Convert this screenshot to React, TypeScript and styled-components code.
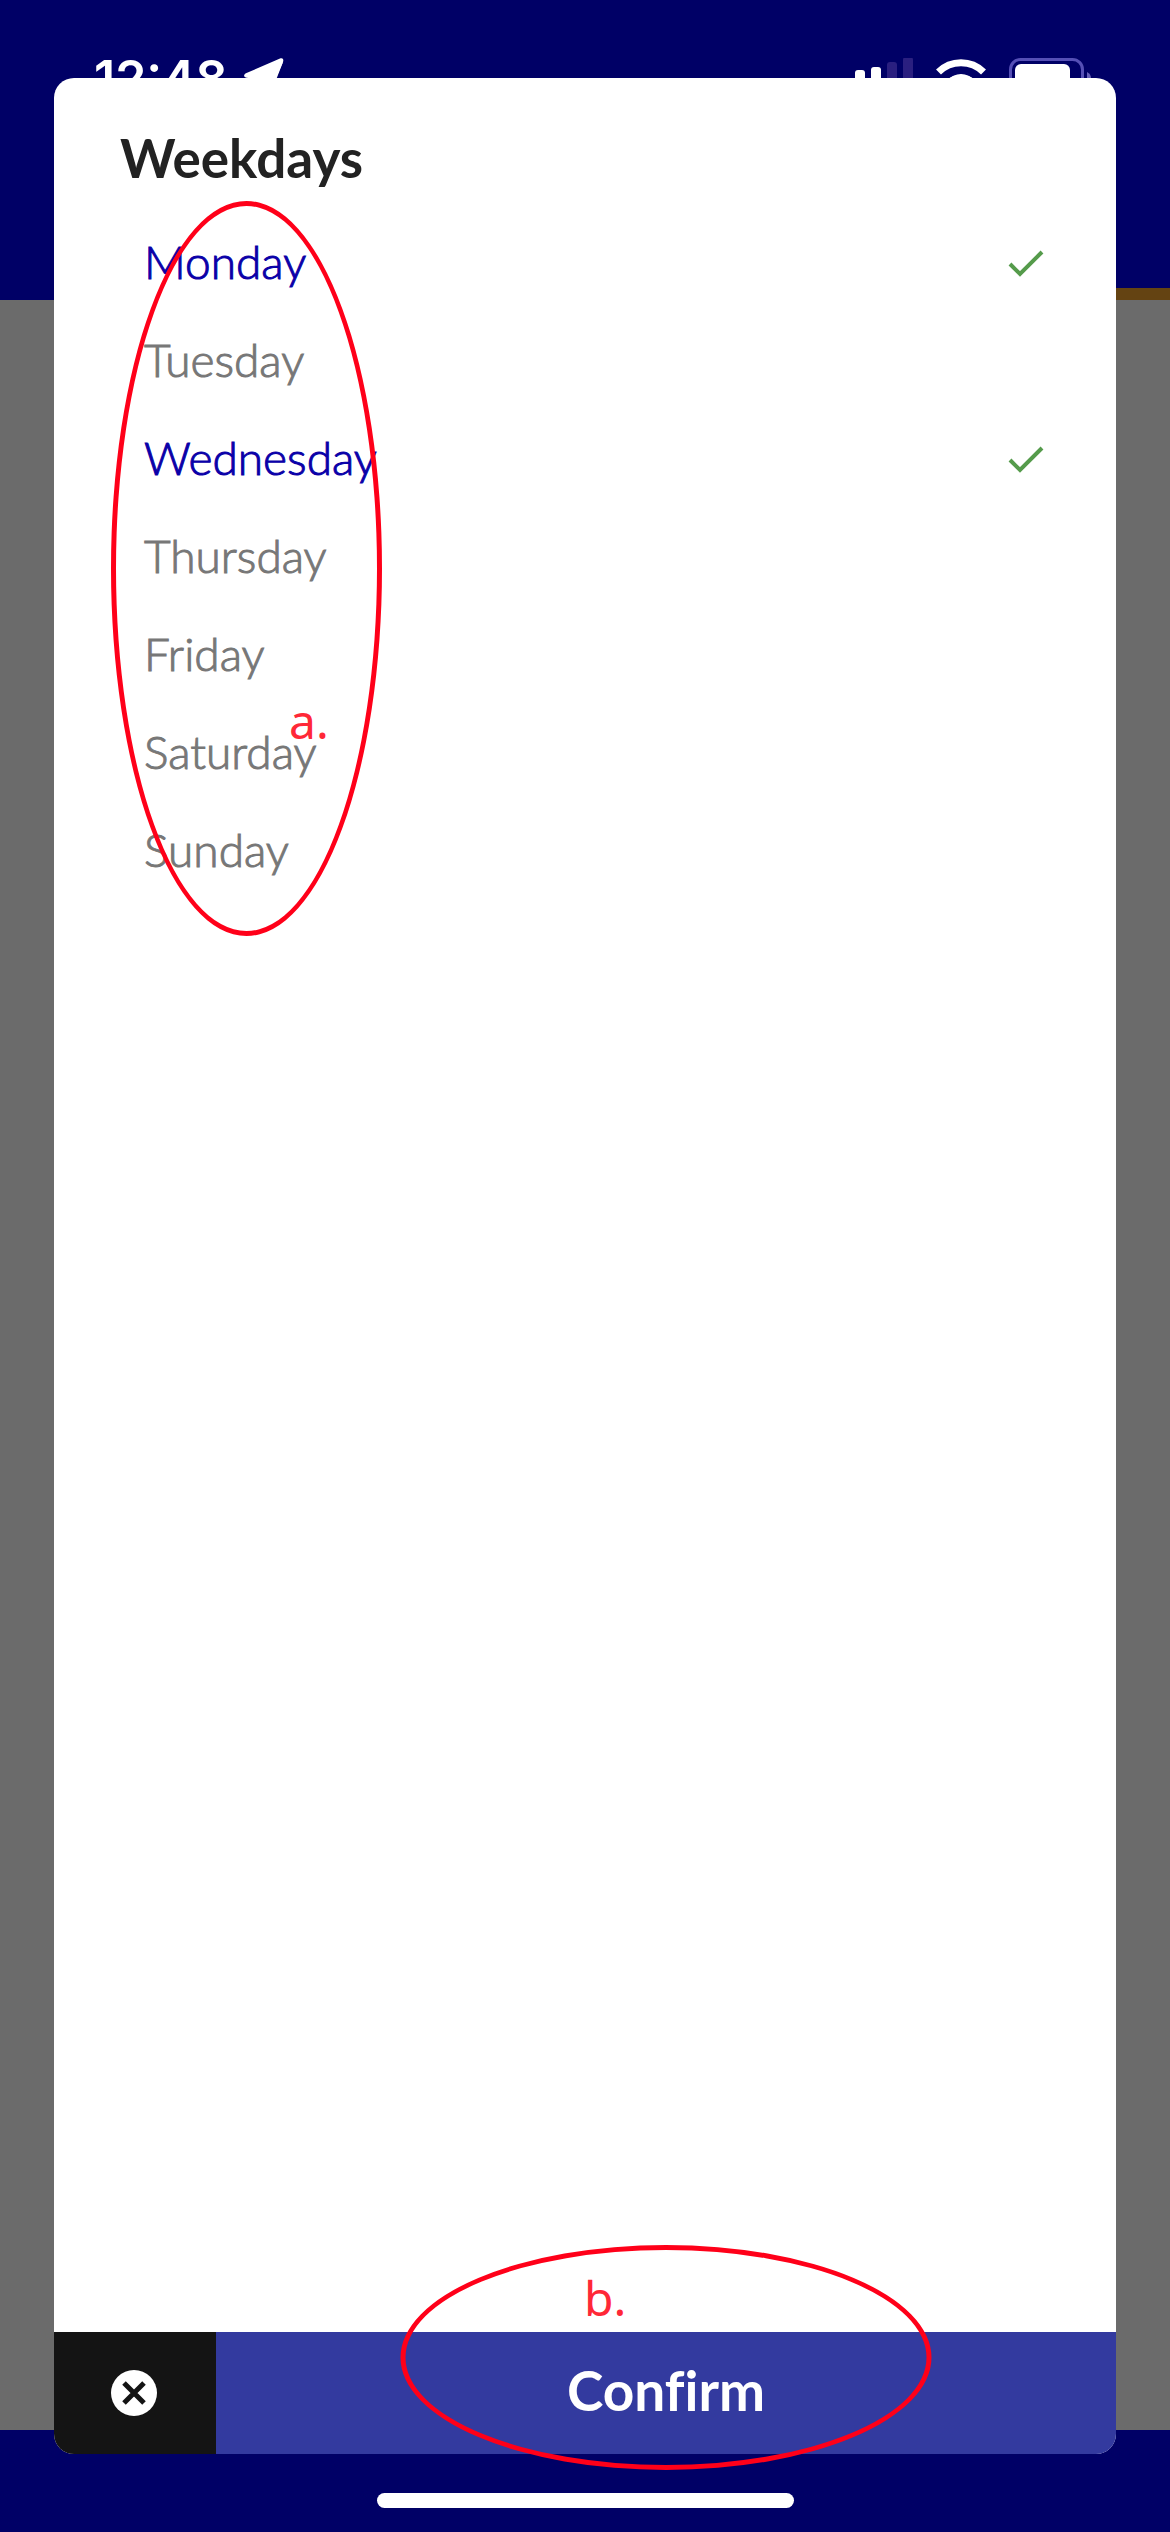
import React, { useState } from "react";
import styled, { createGlobalStyle } from "styled-components";

const GlobalStyle = createGlobalStyle`
  *, *::before, *::after { box-sizing: border-box; }
  body { margin: 0; font-family: Lato, "Open Sans", sans-serif; }
`;

const Screen = styled.div`
  position: relative;
  display: flex;
  flex-direction: column;
  min-height: 100vh;
  background: #6b6b6b;
`;

const Header = styled.header`
  display: flex;
  flex-direction: column;
  justify-content: space-between;
  height: 300px;
  background: #000066;
`;

const StatusBar = styled.div`
  display: flex;
  justify-content: space-between;
  align-items: flex-start;
  padding: 48px 78px 0 94px;
  color: #ffffff;
`;

const StatusGroup = styled.div<{ $gap: number }>`
  display: flex;
  align-items: center;
  gap: ${(p) => p.$gap}px;
  height: 60px;
`;

const Clock = styled.time`
  font-family: Inter, sans-serif;
  font-size: 50px;
  line-height: 60px;
  font-weight: 600;
`;

const Progress = styled.div`
  align-self: flex-end;
  width: 50%;
  height: 12px;
  background: #644312;
`;

const HomeBar = styled.footer`
  display: flex;
  justify-content: center;
  align-items: flex-end;
  height: 102px;
  margin-top: auto;
  padding-bottom: 24px;
  background: #000066;
`;

const HomeIndicator = styled.div`
  width: 417px;
  height: 15px;
  border-radius: 8px;
  background: #ffffff;
`;

const Overlay = styled.div`
  position: absolute;
  inset: 0;
  display: flex;
  padding: 78px 54px;
`;

const Dialog = styled.form`
  display: flex;
  flex-direction: column;
  flex: 1;
  border-radius: 20px;
  background: #ffffff;
`;

const Title = styled.h1`
  margin: 0;
  padding: 50px 66px 26px;
  color: #222222;
  font-size: 53px;
  line-height: 60px;
  font-weight: 700;
`;

const DayList = styled.ul`
  position: relative;
  margin: 0;
  padding: 0 66px 0 90px;
  list-style: none;
`;

const DayRow = styled.label<{ $selected: boolean }>`
  display: flex;
  justify-content: space-between;
  align-items: center;
  height: 98px;
  color: ${(p) => (p.$selected ? "#0a00a8" : "#777777")};
  font-size: 46px;
  font-weight: 300;
  -webkit-text-stroke: 1px currentColor;
  cursor: pointer;
`;

const DayCheckbox = styled.input`
  appearance: none;
  width: 1px;
  height: 1px;
  margin: 0;
  order: 3;
`;

const DayName = styled.span`
  flex: 1;
  padding-bottom: 4px;
`;

const Actions = styled.div`
  display: flex;
  height: 122px;
  margin-top: auto;
`;

const ActionButton = styled.button`
  display: flex;
  justify-content: center;
  align-items: center;
  margin: 0;
  padding: 0;
  border: 0;
  color: #ffffff;
  font-family: inherit;
  font-size: 55px;
  font-weight: 700;
  font-variant-ligatures: none;
  cursor: pointer;
`;

const CancelButton = styled(ActionButton)`
  width: 162px;
  border-bottom-left-radius: 20px;
  background: #141414;
`;

const ConfirmSlot = styled.div`
  position: relative;
  display: flex;
  flex: 1;
`;

const ConfirmButton = styled(ActionButton)`
  flex: 1;
  padding-bottom: 6px;
  border-bottom-right-radius: 20px;
  background: #333a9f;
`;

const Marker = styled.div`
  position: absolute;
  border: 5px solid #ff0019;
  border-radius: 50%;
  pointer-events: none;
`;

const DaysMarker = styled(Marker)`
  top: -13px;
  left: 57px;
  width: 271px;
  height: 735px;
`;

const ConfirmMarker = styled(Marker)`
  top: -87px;
  left: 50%;
  width: 531px;
  height: 225px;
  transform: translateX(-50%);
`;

const MarkerLabel = styled.span<{ $top: number; $left: number }>`
  position: absolute;
  top: ${(p) => p.$top}px;
  left: ${(p) => p.$left}px;
  color: #ff2837;
  font-family: "Noto Sans", sans-serif;
  font-size: 48px;
  line-height: 60px;
`;

const LocationIcon = () => (
  <svg width="40" height="40" viewBox="0 0 40 40" fill="#fff" aria-hidden="true">
    <path d="M36 0.500C38.500 -0.500 40 1 39 4L25 36C24 39 20 38.500 20 35.500V21.500C20 20.500 19.500 20 18.500 20H4.500C-1 20 -1 16.500 2.500 15Z" />
    <path d="M39 4L32 22H4Z" />
  </svg>
);

const SignalIcon = () => (
  <svg width="58" height="40" viewBox="0 0 58 40" fill="#fff" aria-hidden="true">
    <rect x="0" y="12" width="10" height="24" rx="3" />
    <rect x="16" y="9" width="10" height="27" rx="3" />
    <rect x="32" y="4" width="10" height="32" rx="3" fill="#2a1f80" />
    <rect x="48" y="-1" width="10" height="37" rx="3" fill="#2a1f80" />
  </svg>
);

const WifiIcon = () => (
  <svg width="50" height="40" viewBox="0 0 50 40" fill="none" stroke="#fff" strokeWidth="7" aria-hidden="true">
    <path d="M2.500 14A32 32 0 0 1 47.500 14" />
    <path d="M10 23A21 21 0 0 1 40 23L25 38Z" fill="#fff" stroke="none" />
    <path d="M10 23Q25 9 40 23Z" fill="#fff" stroke="none" />
  </svg>
);

const BatteryIcon = () => (
  <svg width="83" height="40" viewBox="0 0 83 40" aria-hidden="true">
    <rect x="1.500" y="1.500" width="72" height="36" rx="10" fill="none" stroke="#554fb5" strokeWidth="3" />
    <rect x="6" y="6" width="55" height="27" rx="6" fill="#fff" />
    <path d="M78 14Q82 16 82 20Q82 24 78 26Z" fill="#6660b8" />
  </svg>
);

const CheckIcon = () => (
  <svg width="42" height="30" viewBox="0 0 42 30" fill="none" stroke="#559b4b" strokeWidth="4" aria-hidden="true">
    <path d="M3 16L13 26L35 4" />
  </svg>
);

const CloseIcon = () => (
  <svg width="48" height="48" viewBox="0 0 48 48" aria-hidden="true">
    <circle cx="23" cy="24" r="23" fill="#fff" />
    <path d="M13 14L33 34M33 14L13 34" stroke="#141414" strokeWidth="5" />
  </svg>
);

const DAYS = ["Monday", "Tuesday", "Wednesday", "Thursday", "Friday", "Saturday", "Sunday"];

export default function App() {
  const [selected, setSelected] = useState<string[]>(["Monday", "Wednesday"]);

  const toggle = (day: string) =>
    setSelected((days) => (days.includes(day) ? days.filter((d) => d !== day) : [...days, day]));

  return (
    <Screen>
      <GlobalStyle />
      <Header>
        <StatusBar>
          <StatusGroup $gap={16}>
            <Clock>12:48</Clock>
            <LocationIcon />
          </StatusGroup>
          <StatusGroup $gap={23}>
            <SignalIcon />
            <WifiIcon />
            <BatteryIcon />
          </StatusGroup>
        </StatusBar>
        <Progress />
      </Header>
      <HomeBar>
        <HomeIndicator />
      </HomeBar>
      <Overlay>
        <Dialog role="dialog" aria-labelledby="dialog-title" onSubmit={(e) => e.preventDefault()}>
          <Title id="dialog-title">Weekdays</Title>
          <DayList>
            {DAYS.map((day) => (
              <li key={day}>
                <DayRow $selected={selected.includes(day)}>
                  <DayCheckbox type="checkbox" checked={selected.includes(day)} onChange={() => toggle(day)} />
                  <DayName>{day}</DayName>
                  {selected.includes(day) && <CheckIcon />}
                </DayRow>
              </li>
            ))}
            <DaysMarker />
            <MarkerLabel $top={477} $left={235}>a.</MarkerLabel>
          </DayList>
          <Actions>
            <CancelButton type="button" aria-label="Cancel">
              <CloseIcon />
            </CancelButton>
            <ConfirmSlot>
              <ConfirmButton type="submit">Confirm</ConfirmButton>
              <ConfirmMarker />
              <MarkerLabel $top={-64} $left={368}>b.</MarkerLabel>
            </ConfirmSlot>
          </Actions>
        </Dialog>
      </Overlay>
    </Screen>
  );
}
